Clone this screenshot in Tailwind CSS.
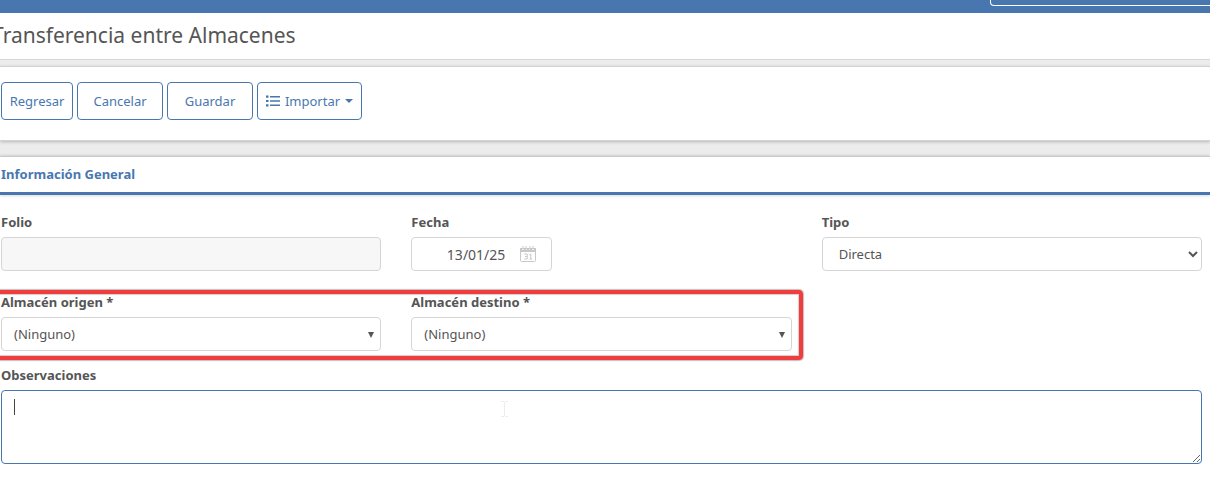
<!DOCTYPE html>
<html lang="es">
<head>
    <meta charset="UTF-8">
    <meta name="viewport" content="width=device-width, initial-scale=1.0">
    <title>Transferencia entre Almacenes</title>
    <script src="https://cdn.jsdelivr.net/npm/@tailwindcss/browser@4"></script>
</head>
<body class="bg-white font-['Trebuchet_MS','Noto_Sans',sans-serif] text-[14px] leading-5 text-[#555] overflow-x-hidden">
    <!-- Top bar -->
    <div class="h-[13px] bg-[#4877b0] flex justify-end items-start">
        <input type="search" aria-label="Buscar" class="w-[220px] h-[6px] border border-t-0 border-r-0 border-white rounded-bl-[4px]">
    </div>

    <!-- Page title -->
    <header class="h-[47px] bg-white border-b border-[#d6d6d6]">
        <h1 class="-ml-2 text-[21px] leading-[45px] whitespace-nowrap">Transferencia entre Almacenes</h1>
    </header>

    <main class="bg-[#ececec] pt-[6px]">
        <!-- Actions -->
        <div class="bg-white border-t border-b border-[#d2d2d2] shadow-[0_1px_3px_rgba(0,0,0,0.22)] pt-[15px] pb-5 pl-px flex gap-1 text-[#4877b0]">
            <button type="button" class="w-[72px] h-[38px] border border-[#4877b0] rounded-[4px] bg-white text-[13px]">Regresar</button>
            <button type="button" class="w-[86px] h-[38px] border border-[#4877b0] rounded-[4px] bg-white text-[13px]">Cancelar</button>
            <button type="button" class="w-[86px] h-[38px] border border-[#4877b0] rounded-[4px] bg-white text-[13px]">Guardar</button>
            <button type="button" class="w-[105px] h-[38px] border border-[#4877b0] rounded-[4px] bg-white text-[13px] flex items-center justify-center gap-[5px]">
                <svg class="w-[14px] h-[12px]" viewBox="0 0 14 12" fill="currentColor" aria-hidden="true">
                    <path d="M0 .5h2.500v2.200H0zM4 1h10v1.600H4zM0 4.900h2.500v2.200H0zM4 5.200h10v1.600H4zM0 9.300h2.500v2.200H0zM4 9.400h10V11H4z"/>
                </svg>
                <span>Importar</span>
                <svg class="w-2 h-1" viewBox="0 0 8 4" fill="currentColor" aria-hidden="true"><path d="M0 0h8L4 4z"/></svg>
            </button>
        </div>

        <!-- General information -->
        <section class="mt-[15px] bg-white border-t border-[#cfcfcf] shadow-[0_0_3px_rgba(0,0,0,0.2)] pb-8">
            <h2 class="h-[38px] pl-px leading-[34px] text-[13px] font-bold text-[#4877b0] border-b-3 border-[#4877b0] shadow-[0_1px_3px_rgba(0,0,0,0.15)]">Información General</h2>

            <form class="pt-[17px] pl-px pr-2">
                <div class="grid grid-cols-3 gap-x-[30px]">
                    <div>
                        <label for="folio" class="block h-[25px] text-[13px] font-bold">Folio</label>
                        <input id="folio" type="text" disabled class="block w-full h-[34px] border border-[#d5d5d5] rounded-[4px] bg-[#f7f7f7]">
                    </div>
                    <div>
                        <label for="fecha" class="block h-[25px] text-[13px] font-bold">Fecha</label>
                        <div class="w-[141px] h-[34px] flex items-center border border-[#d5d5d5] rounded-[4px] bg-white pr-[15px]">
                            <input id="fecha" type="text" value="13/01/25" class="flex-1 min-w-0 h-full pr-[15px] text-right outline-none">
                            <svg class="w-4 h-4" viewBox="0 0 16 16" aria-hidden="true">
                                <path d="M1.500 2.500h13q1 0 1 1v11q0 1-1 1h-13q-1 0-1-1v-11q0-1 1-1z" fill="#fff" stroke="#c8c8c8"/>
                                <path d="M0 2h2v2h2V2h2v2h1V2h2v2h1V2h2v2h2V2h2v4H0zM2.500 0h1v3.500h-1zM5.500 0h1v3.500h-1zM9.500 0h1v3.500h-1zM12.500 0h1v3.500h-1z" fill="#c8c8c8"/>
                                <path d="M4.300 8h2.900v5H4.300M5 10.500h2.200M9.300 9l1.500-1v5M9.500 13h2.700" fill="none" stroke="#c8c8c8"/>
                            </svg>
                        </div>
                    </div>
                    <div>
                        <label for="tipo" class="block h-[25px] text-[13px] font-bold">Tipo</label>
                        <select id="tipo" class="block w-full h-[34px] pl-3 pr-1 border border-[#d5d5d5] rounded-[4px] bg-white text-[13px]">
                            <option>Directa</option>
                        </select>
                    </div>
                </div>

                <div class="grid grid-cols-3 gap-x-[30px] mt-[21px]">
                    <!-- Required warehouses, outlined in red -->
                    <div class="relative col-span-2 grid grid-cols-2 gap-x-[30px]">
                        <div>
                            <label for="origen" class="block h-[25px] text-[13px] font-bold">Almacén origen *</label>
                            <div class="relative">
                                <select id="origen" class="appearance-none block w-full h-[34px] px-3 border border-[#d5d5d5] rounded-[4px] bg-white text-[13px]">
                                    <option>(Ninguno)</option>
                                </select>
                                <svg class="absolute right-[7px] top-[15px] w-[6px] h-[6px] pointer-events-none" viewBox="0 0 6 6" fill="#555" aria-hidden="true"><path d="M0 0h6L3 6z"/></svg>
                            </div>
                        </div>
                        <div>
                            <label for="destino" class="block h-[25px] text-[13px] font-bold">Almacén destino *</label>
                            <div class="relative">
                                <select id="destino" class="appearance-none block w-full h-[34px] px-3 border border-[#d5d5d5] rounded-[4px] bg-white text-[13px]">
                                    <option>(Ninguno)</option>
                                </select>
                                <svg class="absolute right-[7px] top-[15px] w-[6px] h-[6px] pointer-events-none" viewBox="0 0 6 6" fill="#555" aria-hidden="true"><path d="M0 0h6L3 6z"/></svg>
                            </div>
                        </div>
                        <div class="absolute -left-2 -right-[11px] -top-[2px] -bottom-[9px] border-4 border-[#f03e3e] rounded-[4px] shadow-[0_0_1px_1px_rgba(110,90,90,0.4),inset_0_0_1px_1px_rgba(110,90,90,0.3)] pointer-events-none"></div>
                    </div>
                </div>

                <div class="mt-[14px]">
                    <label for="observaciones" class="block h-[25px] text-[13px] font-bold">Observaciones</label>
                    <div class="relative">
                        <textarea id="observaciones" class="block w-full h-[74px] px-3 py-[6px] border border-[#4877b0] rounded-[4px] bg-white outline-none"></textarea>
                        <!-- Text caret -->
                        <span class="absolute left-[13px] top-[9px] w-px h-4 bg-[#444] pointer-events-none"></span>
                        <!-- Mouse pointer -->
                        <svg class="absolute left-[500px] top-[11px] w-[7px] h-4 pointer-events-none" viewBox="0 0 7 16" fill="none" stroke="#ececec" aria-hidden="true"><path d="M0 .5h3M4 .5h3M3.500 1v14M0 15.500h3M4 15.500h3"/></svg>
                    </div>
                </div>
            </form>
        </section>
    </main>
</body>
</html>
